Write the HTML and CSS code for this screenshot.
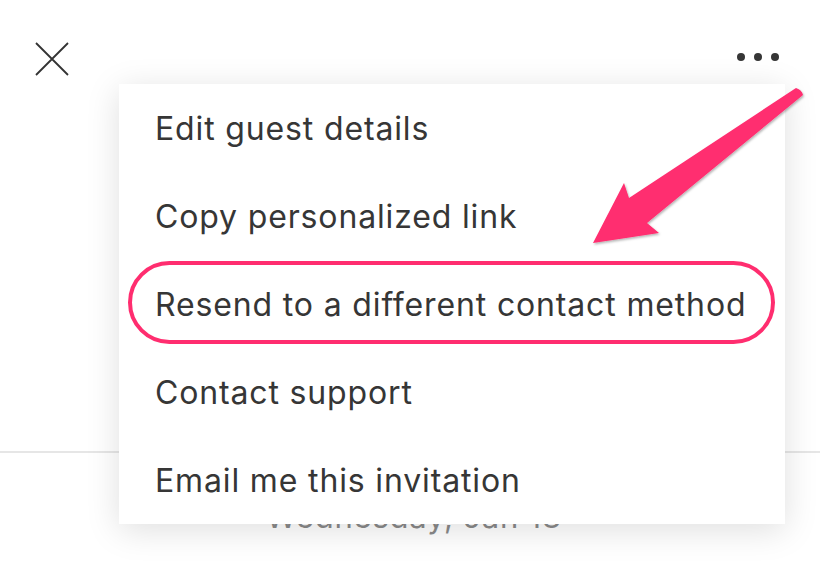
FILE: index.html
```html
<!DOCTYPE html>
<html lang="en">
<head>
    <meta charset="UTF-8">
    <title>Guest details</title>
    <link rel="stylesheet" href="styles.css">
</head>
<body>
    <div class="page">
        <!-- Top bar -->
        <div class="topbar">
            <button class="icon-btn close-btn" aria-label="Close">
                <svg width="34" height="34" viewBox="0 0 34 34">
                    <path d="M1 1L33 33M33 1L1 33" stroke="#333" stroke-width="1.8" fill="none"/>
                </svg>
            </button>
            <button class="icon-btn more-btn" aria-label="More">
                <span></span><span></span><span></span>
            </button>
        </div>

        <div class="event-body">
            <div class="divider"></div>
            <div class="event-date">Wednesday, Jan 18</div>
        </div>

        <!-- Overflow menu -->
        <ul class="menu">
            <li class="menu-item">Edit guest details</li>
            <li class="menu-item">Copy personalized link</li>
            <li class="menu-item">Resend to a different contact method</li>
            <li class="menu-item">Contact support</li>
            <li class="menu-item">Email me this invitation</li>
        </ul>

        <!-- Annotation -->
        <svg class="annotation" width="820" height="566" viewBox="0 0 820 566">
            <defs>
                <filter id="shadow" x="-20%" y="-20%" width="140%" height="140%">
                    <feDropShadow dx="1" dy="1.5" stdDeviation="1.2" flood-color="#000" flood-opacity="0.3"/>
                </filter>
            </defs>
            <rect x="130" y="263" width="643" height="79" rx="39.5" fill="none" stroke="#FF2D6F" stroke-width="4"/>
            <path filter="url(#shadow)" fill="#FF2D6F"
                  d="M796 88 Q802 90 803 95 L647 223 L659 233 L593 243 L624 183 L629 198 L796 88 Z"/>
        </svg>
    </div>
</body>
</html>
```

FILE: styles.css
```css
* {
    margin: 0;
    padding: 0;
    box-sizing: border-box;
}
:root {
    --text-color: #363636;
    --muted-color: #8a8a8a;
    --line-color: #e6e6e6;
}
body {
    font-family: Inter, 'Noto Sans', Arial, sans-serif;
    background: #ffffff;
    color: var(--text-color);
    width: 820px;
    height: 566px;
    overflow: hidden;
}
.page {
    position: relative;
    height: 566px;
}
/* Top bar */
.topbar {
    display: flex;
    justify-content: space-between;
    align-items: flex-start;
    padding: 42px 41px 0 35px;
    height: 90px;
}
.icon-btn {
    background: none;
    border: none;
    cursor: pointer;
}
.close-btn svg {
    display: block;
}
.more-btn {
    display: flex;
    gap: 9px;
    margin-top: 11px;
}
.more-btn span {
    width: 8px;
    height: 8px;
    border-radius: 50%;
    background: var(--text-color);
}
/* Page content under the menu */
.event-body {
    padding-top: 361px;
}
.divider {
    height: 2px;
    background: var(--line-color);
}
.event-date {
    text-align: center;
    font-size: 31px;
    letter-spacing: 0.8px;
    color: var(--muted-color);
    margin-top: 45px;
    padding-left: 8px;
}
/* Overflow menu */
.menu {
    position: absolute;
    left: 119px;
    top: 84px;
    width: 666px;
    list-style: none;
    background: #ffffff;
    box-shadow: 0 6px 32px rgba(0, 0, 0, 0.13);
}
.menu-item {
    height: 88px;
    display: flex;
    align-items: center;
    padding-left: 36px;
    font-size: 32px;
    letter-spacing: 0.85px;
    color: var(--text-color);
    white-space: nowrap;
}
/* Annotation overlay */
.annotation {
    position: absolute;
    left: 0;
    top: 0;
    pointer-events: none;
}
```
